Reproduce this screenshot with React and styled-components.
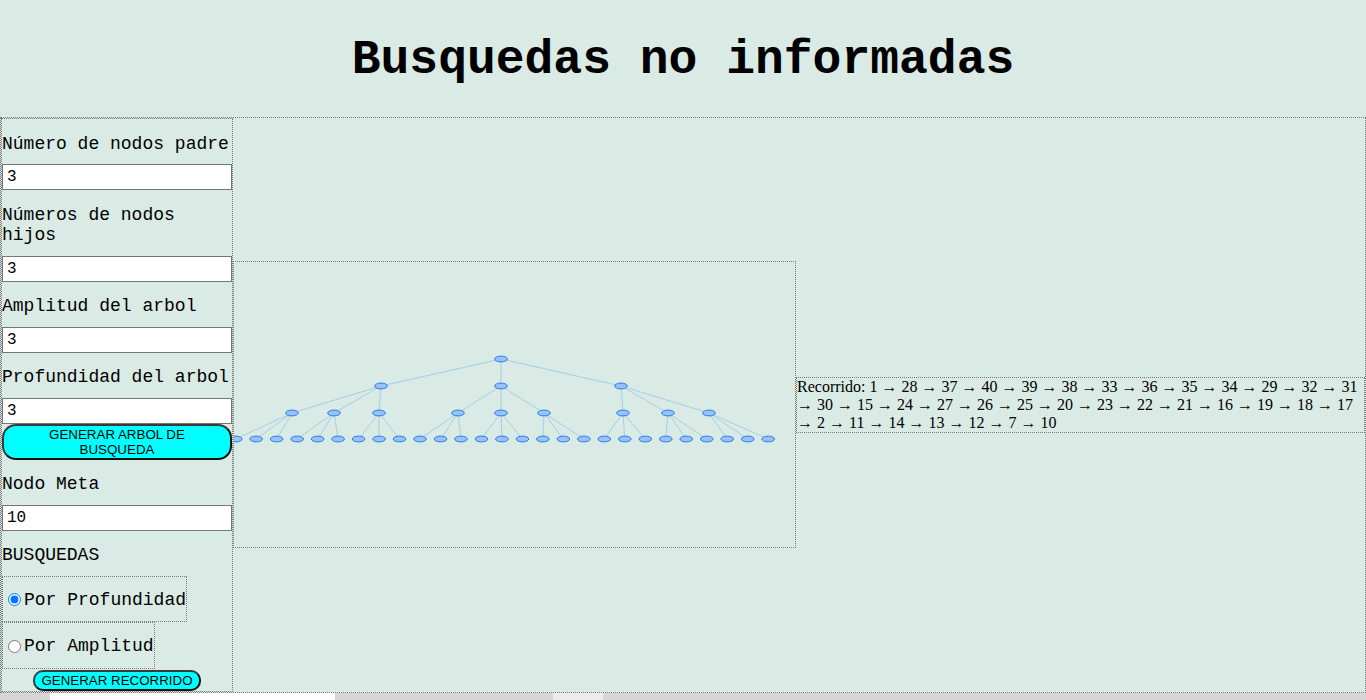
import styled, { createGlobalStyle } from 'styled-components'

const GlobalStyle = createGlobalStyle`
    body {
        margin: 0;
        background-color: #daeae4;
        font-family: "Liberation Mono", "Courier New", monospace;
        color: #000;
    }
`

const Title = styled.h1`
    margin: 0;
    padding: 33px 0 30px;
    line-height: 54px;
    font-size: 48px;
    font-weight: bold;
    text-align: center;
    font-family: "Liberation Mono", "Courier New", monospace;
`

const Main = styled.div`
    display: flex;
    align-items: center;
    width: 100%;
    box-sizing: border-box;
    border: 1px dotted #7a7a7a;
`

const Sidebar = styled.div`
    display: flex;
    flex-direction: column;
    align-items: flex-start;
    width: 232px;
    flex-shrink: 0;
    box-sizing: border-box;
    border: 1px dotted #7a7a7a;
`

const Label = styled.p`
    margin: 14.5px 0 10px;
    font-size: 18px;
    line-height: 20.5px;
`

const TextInput = styled.input`
    width: 230px;
    height: 26px;
    box-sizing: border-box;
    border: 1px solid #767676;
    padding: 0 4px;
    background: #fff;
    font-family: "Liberation Mono", "Courier New", monospace;
    font-size: 16px;
    color: #000;
    outline: none;
`

const CyanButton = styled.button`
    width: ${(p) => p.$width}px;
    height: ${(p) => p.$height}px;
    box-sizing: border-box;
    padding: 0 ${(p) => p.$pad || 0}px;
    margin-top: ${(p) => p.$top || 0}px;
    align-self: ${(p) => (p.$center ? 'center' : 'flex-start')};
    background-color: #00ffff;
    border: 2px solid #3a3a3a;
    border-bottom-color: #111;
    border-right-color: #111;
    border-radius: ${(p) => p.$radius}px;
    font-family: "Liberation Sans", Arial, sans-serif;
    font-size: 13.33px;
    line-height: 15px;
    color: #000;
    cursor: pointer;
`

const RadioBox = styled.label`
    display: flex;
    align-items: center;
    padding: 13px 0 11px;
    border: 1px dotted #7a7a7a;
    font-size: 18px;
    line-height: 20.5px;
    input {
        margin: 0 3px 0 5px;
        width: 13px;
        height: 13px;
    }
`

const TreeBox = styled.div`
    width: 563px;
    height: 287px;
    flex-shrink: 0;
    box-sizing: border-box;
    border: 1px dotted #7a7a7a;
    overflow: hidden;
    svg {
        display: block;
    }
`

const PathBox = styled.div`
    flex: 1;
    box-sizing: border-box;
    border: 1px dotted #7a7a7a;
    font-family: "Liberation Serif", "Times New Roman", serif;
    font-size: 16px;
    line-height: 18px;
`

const BottomStrip = styled.div`
    display: flex;
    height: 12px;
    background: #d6d6d6;
`

const StripBlock = styled.div`
    margin-left: ${(p) => p.$left}px;
    width: ${(p) => p.$width}px;
    background: ${(p) => p.$color};
`

// node layout of the drawn tree (page coordinates)
const level1 = [381, 501, 621]
const level2 = [292, 334, 379, 458, 501, 544, 623, 668, 709]
const level3 = Array.from({ length: 27 }, (_, i) => 235.7 + i * 20.48)
const Y = [360, 387, 414, 440]

function Tree() {
    const edges = []
    level1.forEach((x) => edges.push([501, Y[0], x, Y[1]]))
    level2.forEach((x, j) => edges.push([level1[Math.floor(j / 3)], Y[1], x, Y[2]]))
    level3.forEach((x, j) => edges.push([level2[Math.floor(j / 3)], Y[2], x, Y[3]]))
    const nodes = [
        [501, Y[0]],
        ...level1.map((x) => [x, Y[1]]),
        ...level2.map((x) => [x, Y[2]]),
        ...level3.map((x) => [x, Y[3]]),
    ]
    return (
        <svg width="561" height="285" viewBox="234 263 561 285">
            {edges.map(([x1, y1, x2, y2], i) => (
                <line key={i} x1={x1} y1={y1} x2={x2} y2={y2} stroke="#a5cfe8" strokeWidth="1" />
            ))}
            {nodes.map(([x, y], i) => (
                <ellipse key={i} cx={x} cy={y} rx="6.3" ry="2.9" fill="#97c2fc" stroke="#2b7ce9" strokeWidth="1" />
            ))}
        </svg>
    )
}

const recorrido = [1, 28, 37, 40, 39, 38, 33, 36, 35, 34, 29, 32, 31, 30, 15, 24, 27, 26, 25, 20, 23, 22, 21, 16, 19, 18, 17, 2, 11, 14, 13, 12, 7, 10]

function App() {
    return (
        <>
            <GlobalStyle />
            <Title>Busquedas no informadas</Title>
            <Main>
                <Sidebar>
                    <Label>Número de nodos padre</Label>
                    <TextInput defaultValue="3" />
                    <Label>Números de nodos hijos</Label>
                    <TextInput defaultValue="3" />
                    <Label>Amplitud del arbol</Label>
                    <TextInput defaultValue="3" />
                    <Label>Profundidad del arbol</Label>
                    <TextInput defaultValue="3" />
                    <CyanButton $width={230} $height={36} $radius={14} $pad={12}>
                        GENERAR ARBOL DE BUSQUEDA
                    </CyanButton>
                    <Label>Nodo Meta</Label>
                    <TextInput defaultValue="10" />
                    <Label>BUSQUEDAS</Label>
                    <RadioBox>
                        <input type="radio" name="busqueda" defaultChecked />
                        Por Profundidad
                    </RadioBox>
                    <RadioBox>
                        <input type="radio" name="busqueda" />
                        Por Amplitud
                    </RadioBox>
                    <CyanButton $width={168} $height={21} $radius={10} $top={1} $center>
                        GENERAR RECORRIDO
                    </CyanButton>
                </Sidebar>
                <TreeBox>
                    <Tree />
                </TreeBox>
                <PathBox>{`Recorrido: ${recorrido.join(' → ')}`}</PathBox>
            </Main>
            <BottomStrip>
                <StripBlock $left={50} $width={285} $color="#ffffff" />
                <StripBlock $left={218} $width={50} $color="#ececec" />
            </BottomStrip>
        </>
    )
}

export default App
